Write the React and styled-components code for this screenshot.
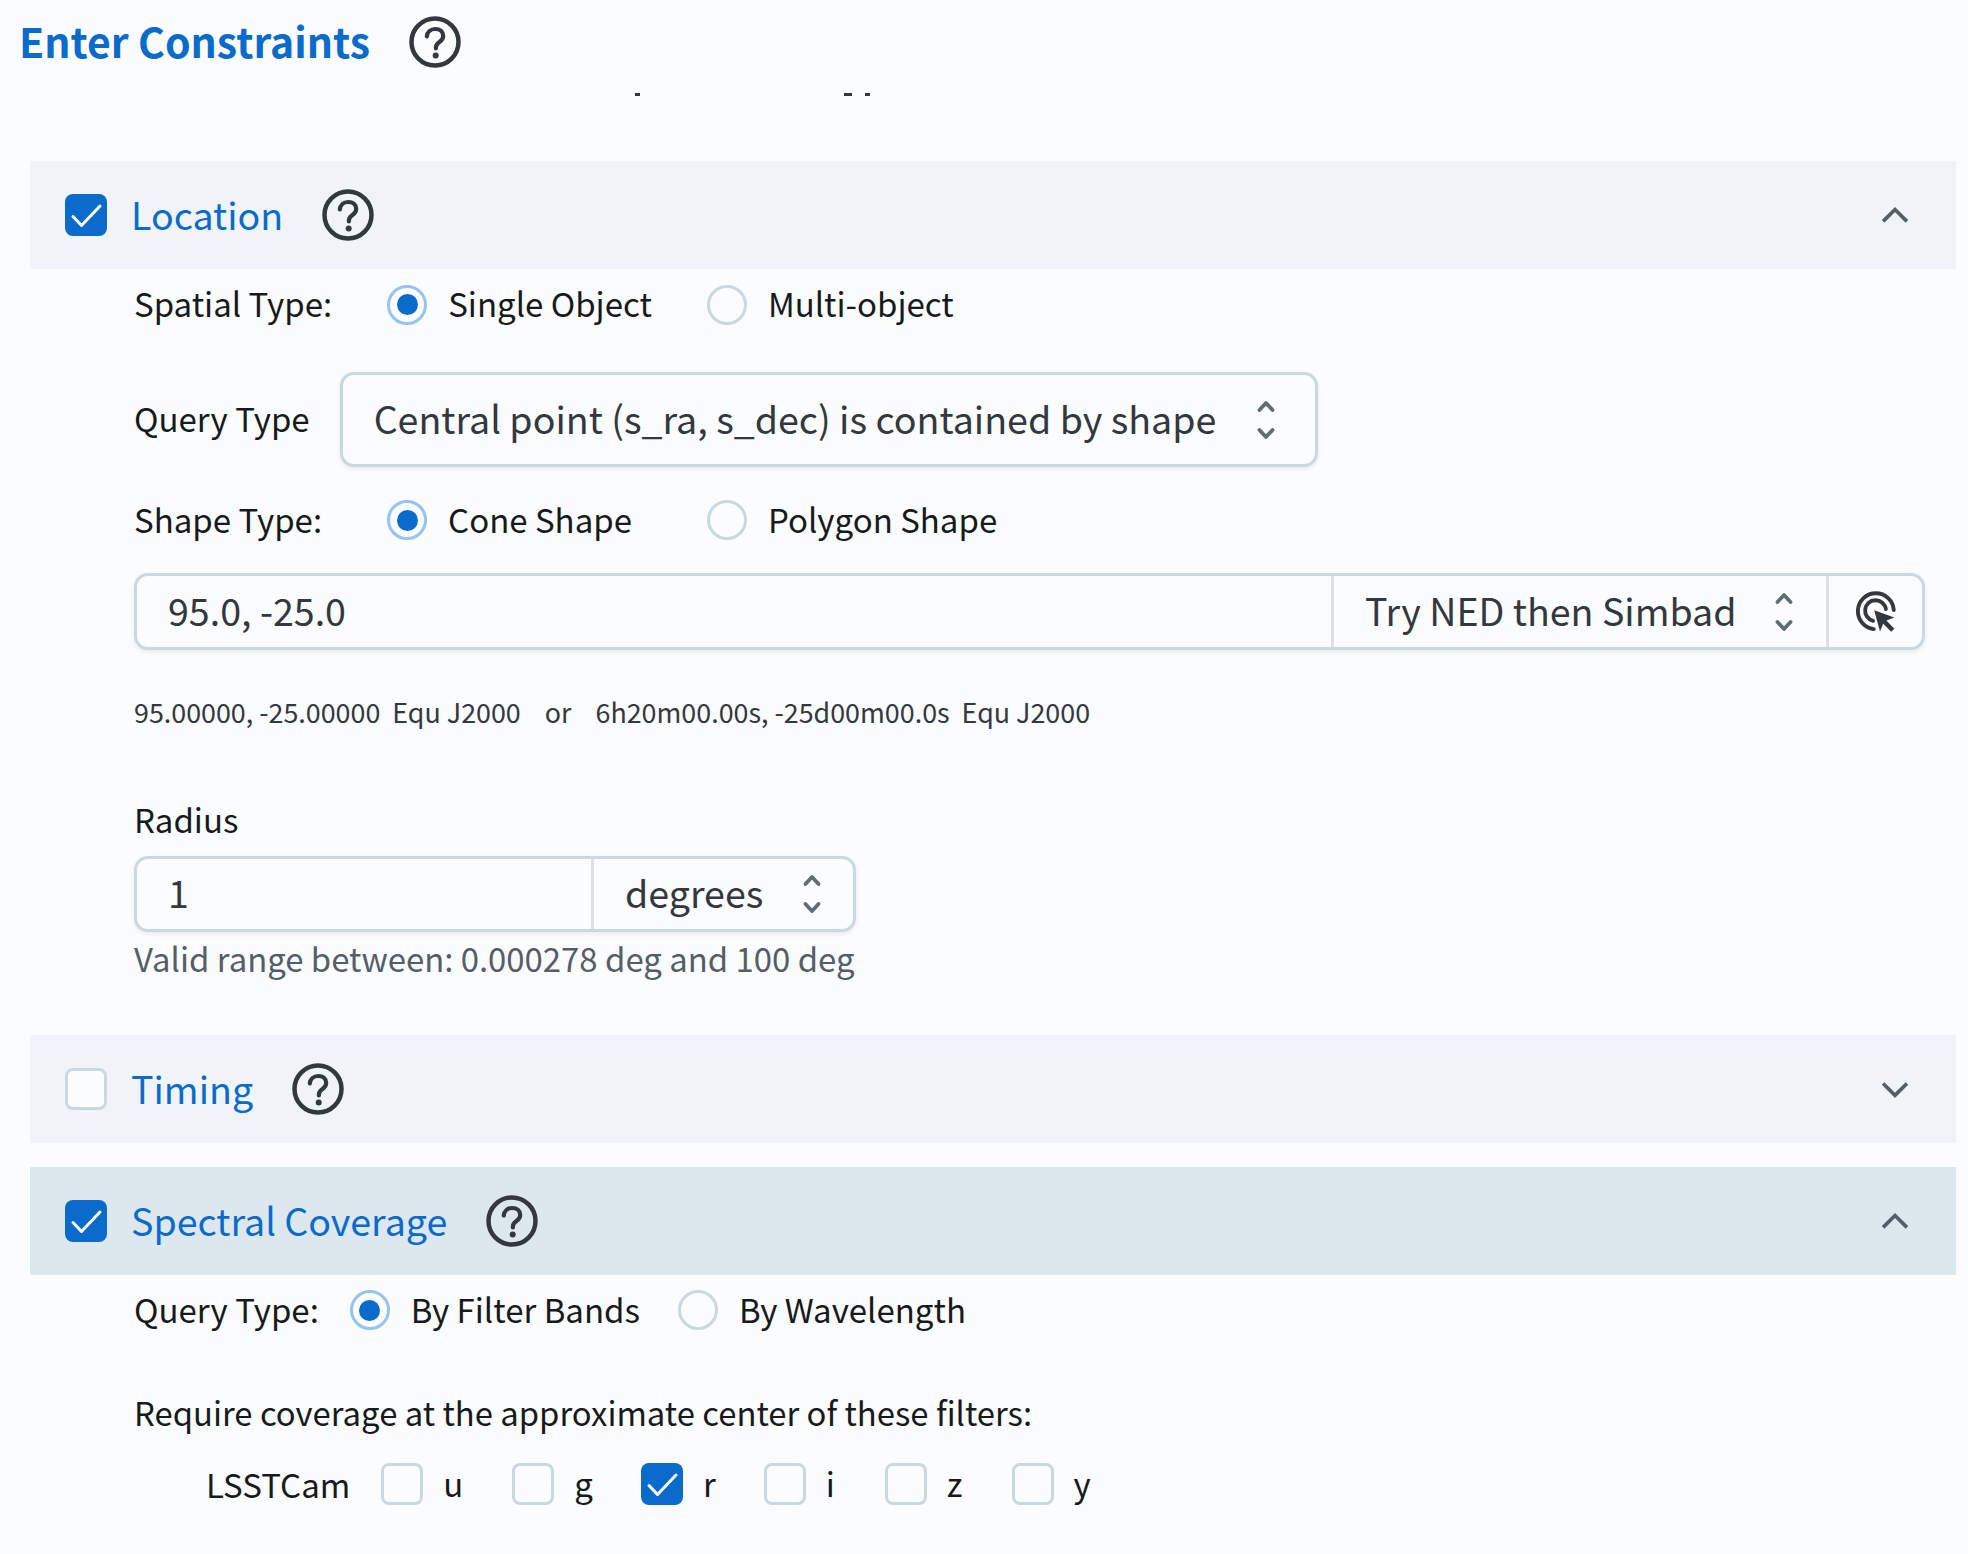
import React from 'react'
import styled, { createGlobalStyle } from 'styled-components'

const Global = createGlobalStyle`
  html, body {
    margin: 0;
    padding: 0;
    background: #fbfcfe;
    height: 100%;
    overflow: hidden;
  }
  body {
    font-family: "Noto Sans CJK SC", "Noto Sans", sans-serif;
    color: #171a1c;
  }
`

const Page = styled.div`
  width: 1968px;
  height: 1554px;
  overflow: hidden;
  background: #fbfcfe;
`

const TitleBar = styled.div`
  height: 83px;
  display: flex;
  align-items: center;
  gap: 39px;
  padding-left: 19px;
`

const Title = styled.h2`
  margin: 0;
  font-size: 41px;
  line-height: 52px;
  font-weight: 700;
  color: #0b6bcb;
  padding-bottom: 4px;
`

// bottoms of the text line scrolled away under the title
const ScrolledOff = styled.div`
  height: 4px;
  margin-top: 10px;
  margin-bottom: 64px;
  display: flex;
  align-items: flex-start;
`

const Speck = styled.span`
  height: 3px;
  width: ${p => p.$w}px;
  margin-left: ${p => p.$ml}px;
  background: #32383e;
`

const Sections = styled.div`
  padding: 0 12px 0 30px;
`

const SectionHead = styled.div`
  height: 108px;
  display: flex;
  align-items: center;
  padding-left: 35px;
  background: ${p => (p.$active ? '#dde7ee' : '#f0f4f8')};
  margin-top: ${p => p.$mt || 0}px;
`

const SectionTitle = styled.span`
  font-size: 37.6px;
  color: #0b6bcb;
  margin-left: 24px;
  margin-right: 39px;
  padding-bottom: 3px;
`

const Chevron = styled.svg`
  margin-left: auto;
  margin-right: 39px;
  width: 44px;
  height: 44px;
  fill: none;
  stroke: #555e68;
  stroke-width: 2;
  stroke-linejoin: miter;
`

const Body = styled.div`
  padding-left: 104px;
  padding-right: 31px;
`

const Row = styled.div`
  display: flex;
  align-items: center;
  height: ${p => p.$h}px;
  margin-top: ${p => p.$mt || 0}px;
  font-size: ${p => p.$fs || 33}px;
`

const Label = styled.span`
  margin-right: ${p => p.$mr}px;
  padding-bottom: 3px;
`

const RadioDot = styled.span`
  box-sizing: border-box;
  width: 40px;
  height: 40px;
  border-radius: 50%;
  border: 3px solid ${p => (p.$on ? '#97c3f0' : '#cdd7e1')};
  display: flex;
  align-items: center;
  justify-content: center;
  margin-right: 21px;
  background: #fbfcfe;

  &::after {
    content: '';
    display: ${p => (p.$on ? 'block' : 'none')};
    width: 21px;
    height: 21px;
    border-radius: 50%;
    background: #0b6bcb;
  }
`

const RadioText = styled.span`
  margin-right: ${p => p.$mr}px;
  padding-bottom: 3px;
`

const Control = styled.div`
  box-sizing: border-box;
  display: flex;
  align-items: center;
  height: ${p => p.$h}px;
  width: ${p => (p.$w ? p.$w + 'px' : 'auto')};
  margin-top: ${p => p.$mt || 0}px;
  border: 3px solid #cdd7e1;
  border-radius: 14px;
  background: #fbfcfe;
  box-shadow: 0 2px 4px rgba(21, 21, 21, 0.08);
  color: #32383e;
  font-size: 37.6px;
`

const Seg = styled.div`
  display: flex;
  align-items: center;
  height: 100%;
  padding-left: 31px;
  flex: ${p => (p.$grow ? 1 : 'none')};
  width: ${p => (p.$w ? p.$w + 'px' : 'auto')};
  box-sizing: border-box;
  border-right: ${p => (p.$div ? '3px solid #dde0e4' : 'none')};
`

const SegText = styled.span`
  padding-bottom: 5px;
`

const Updown = styled.svg`
  width: 30px;
  height: 46px;
  margin-left: auto;
  margin-right: ${p => p.$mr}px;
  fill: none;
  stroke: #636b74;
  stroke-width: 3.8;
  stroke-linecap: round;
  stroke-linejoin: round;
`

const IconSeg = styled.div`
  flex: none;
  width: 93px;
  display: flex;
  align-items: center;
  justify-content: center;
`

const Small = styled.div`
  font-size: 26.85px;
  color: #32383e;
  white-space: pre;
  height: 40px;
  line-height: 38px;
  margin-top: 43px;
`

const Helper = styled.div`
  font-size: 32.9px;
  color: #555e68;
  line-height: 40px;
  height: 42px;
  margin-top: 6px;
`

const FieldLabel = styled.div`
  font-size: 33px;
  line-height: 44px;
  height: 46px;
  margin-top: 64px;
  margin-bottom: 13px;
`

const Filters = styled.div`
  display: flex;
  align-items: center;
  margin-top: 11px;
  padding-left: 72px;
  font-size: 33px;
  height: 60px;
`

const Filter = styled.span`
  margin-left: ${p => p.$ml}px;
  display: flex;
  align-items: center;
`

const FilterName = styled.span`
  margin-left: 20px;
  padding-bottom: 3px;
`

const Box = styled.span`
  box-sizing: border-box;
  display: flex;
  align-items: center;
  justify-content: center;
  width: 42px;
  height: 42px;
  border-radius: 8px;
  border: ${p => (p.$on ? 'none' : '3px solid #cdd7e1')};
  background: ${p => (p.$on ? '#0b6bcb' : '#fbfcfe')};
  flex: none;
`

const Check = () => (
  <svg width="42" height="42" viewBox="0 0 42 42" fill="none" stroke="#fff" strokeWidth="3" strokeLinecap="round" strokeLinejoin="round">
    <path d="M8 22.500l8.500 9L35 12" />
  </svg>
)

const Help = () => (
  <svg width="52" height="52" viewBox="0 0 52 52" fill="none">
    <circle cx="26" cy="26" r="23.500" stroke="#32383e" strokeWidth="4.500" />
    <path d="M17.800 20.500c.4-4.600 4-7.500 8.400-7.500 4.700 0 8 2.900 8 6.900 0 3.100-1.700 4.800-4 6.300-2.300 1.500-3.300 2.700-3.300 5.300v1" stroke="#32383e" strokeWidth="4.200" strokeLinecap="round" />
    <circle cx="26.700" cy="39.500" r="3" fill="#32383e" />
  </svg>
)

const UpdownIcon = ({ mr }) => (
  <Updown viewBox="0 0 30 46" $mr={mr}>
    <path d="M8.500 13l6.500-7 6.500 7M8.500 33l6.500 7 6.500-7" />
  </Updown>
)

const Chev = ({ up }) => (
  <Chevron viewBox="0 0 24 24">
    <path d={up ? 'M5.500 15.500L12 9l6.500 6.500' : 'M5.500 9l6.500 6.500L18.500 9'} />
  </Chevron>
)

const Radio = ({ on, children, mr }) => (
  <>
    <RadioDot $on={on} />
    <RadioText $mr={mr}>{children}</RadioText>
  </>
)

const Head = ({ title, on, active, up, mt }) => (
  <SectionHead $active={active} $mt={mt}>
    <Box $on={on}>{on && <Check />}</Box>
    <SectionTitle>{title}</SectionTitle>
    <Help />
    <Chev up={up} />
  </SectionHead>
)

const TargetIcon = () => (
  <svg width="44" height="44" viewBox="0 0 24 24" fill="none">
    <path d="M10.800 21.300A9.800 9.800 0 1 1 21.700 11" stroke="#32383e" strokeWidth="2.100" strokeLinecap="round" />
    <path d="M10.400 16.800A5.700 5.700 0 1 1 17.400 10.400" stroke="#32383e" strokeWidth="2.100" strokeLinecap="round" />
    <path d="M11 11l11 4-4.300 1.600 4.300 4.500-1.700 1.700-4.400-4.400-1.700 4.200z" fill="#32383e" />
  </svg>
)

const filters = [
  { name: 'u', ml: 31 },
  { name: 'g', ml: 49 },
  { name: 'r', ml: 48, on: true },
  { name: 'i', ml: 48 },
  { name: 'z', ml: 50 },
  { name: 'y', ml: 49 },
]

export default function App() {
  return (
    <Page>
      <Global />
      <TitleBar>
        <Title>Enter Constraints</Title>
        <Help />
      </TitleBar>
      <ScrolledOff>
        <Speck $ml={635} $w={5} />
        <Speck $ml={204} $w={8} />
        <Speck $ml={13} $w={5} />
      </ScrolledOff>
      <Sections>
        <Head title="Location" on up />
        <Body>
          <Row $h={71}>
            <Label $mr={55}>Spatial Type:</Label>
            <Radio on mr={55}>Single Object</Radio>
            <Radio>Multi-object</Radio>
          </Row>
          <Row $h={95} $mt={32}>
            <Label $mr={30}>Query Type</Label>
            <Control $w={978} $h={95}>
              <Seg $grow>
                <SegText>Central point (s_ra, s_dec) is contained by shape</SegText>
                <UpdownIcon mr={34} />
              </Seg>
            </Control>
          </Row>
          <Row $h={76} $mt={15}>
            <Label $mr={65}>Shape Type:</Label>
            <Radio on mr={75}>Cone Shape</Radio>
            <Radio>Polygon Shape</Radio>
          </Row>
          <Control $h={77} $mt={15}>
            <Seg $grow $div><SegText>95.0, -25.0</SegText></Seg>
            <Seg $w={495} $div>
              <SegText>Try NED then Simbad</SegText>
              <UpdownIcon mr={27} />
            </Seg>
            <IconSeg><TargetIcon /></IconSeg>
          </Control>
          <Small>95.00000, -25.00000  Equ J2000    or    6h20m00.00s, -25d00m00.0s  Equ J2000</Small>
          <FieldLabel>Radius</FieldLabel>
          <Control $w={722} $h={76}>
            <Seg $w={457} $div><SegText>1</SegText></Seg>
            <Seg $grow>
              <SegText>degrees</SegText>
              <UpdownIcon mr={26} />
            </Seg>
          </Control>
          <Helper>Valid range between: 0.000278 deg and 100 deg</Helper>
        </Body>
        <Head title="Timing" mt={55} />
        <Head title="Spectral Coverage" on active up mt={24} />
        <Body>
          <Row $h={70}>
            <Label $mr={31}>Query Type:</Label>
            <Radio on mr={38}>By Filter Bands</Radio>
            <Radio>By Wavelength</Radio>
          </Row>
          <Row $h={60} $mt={38} $fs={32.85}>
            <Label>Require coverage at the approximate center of these filters:</Label>
          </Row>
          <Filters>
            LSSTCam
            {filters.map(f => (
              <Filter key={f.name} $ml={f.ml}>
                <Box $on={f.on}>{f.on && <Check />}</Box>
                <FilterName>{f.name}</FilterName>
              </Filter>
            ))}
          </Filters>
        </Body>
      </Sections>
    </Page>
  )
}
